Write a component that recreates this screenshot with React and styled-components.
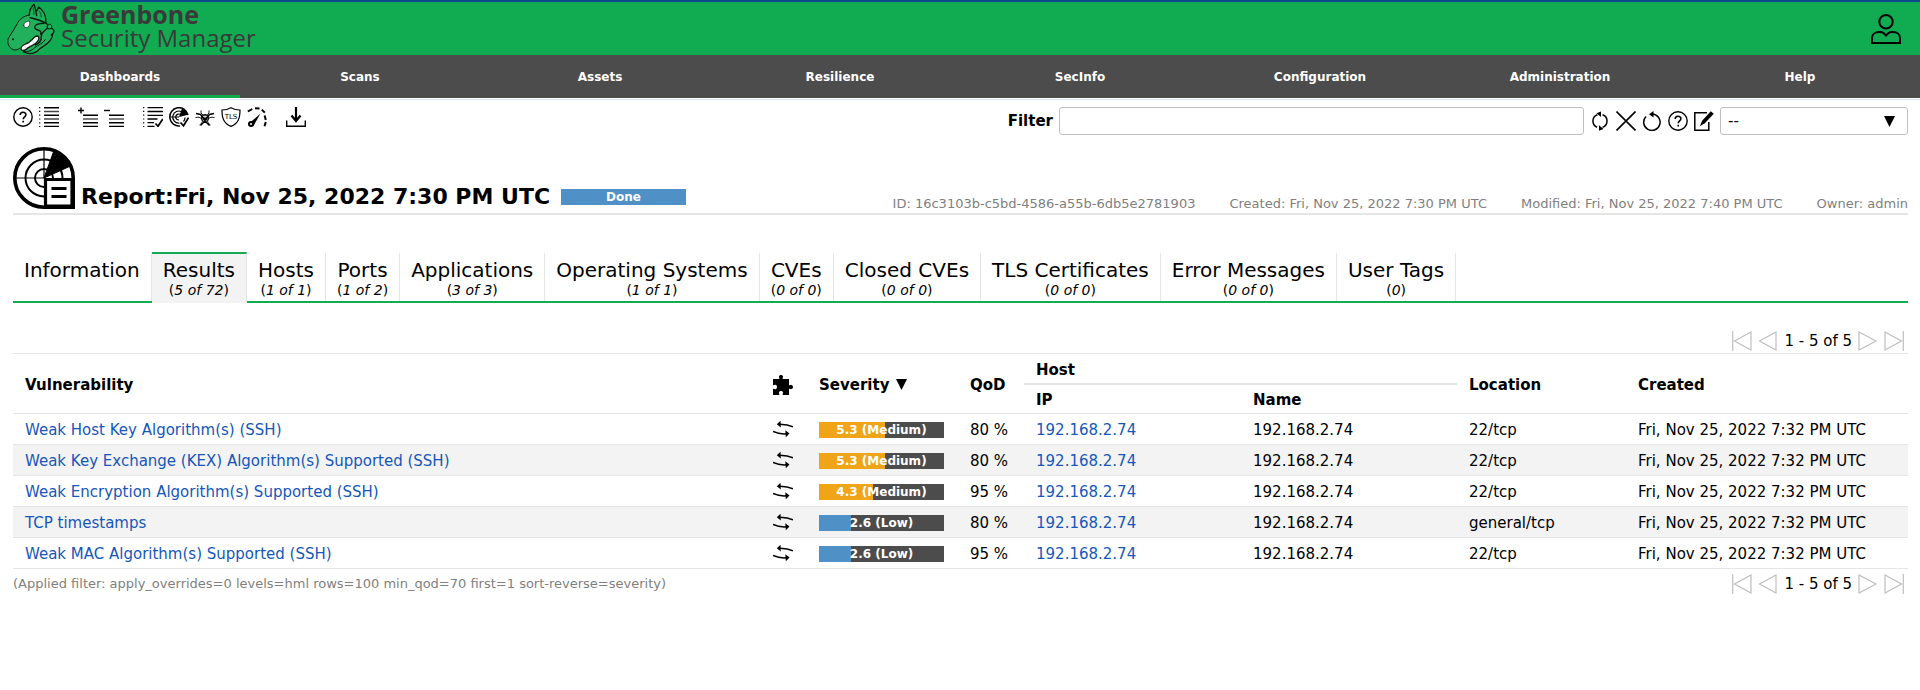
import React from 'react';
import styled, { createGlobalStyle, css } from 'styled-components';

const GREEN = '#11ab51';
const DARK = '#4c4c4c';
const LINE = '#e5e5e5';
const LINK = '#1557ba';
const MUTED = '#7f7f7f';

const GlobalStyle = createGlobalStyle`
  *, *::before, *::after { box-sizing: border-box; }
  body {
    margin: 0;
    background: #fff;
    color: #000;
    font-family: Verdana, "DejaVu Sans", sans-serif;
    font-size: 15px;
    line-height: 20px;
  }
  a { color: inherit; text-decoration: none; }
  button { font: inherit; color: inherit; background: none; border: 0; padding: 0; cursor: pointer; }
  svg { display: block; }
`;

const TopBar = styled.header`
  display: flex;
  align-items: center;
  justify-content: space-between;
  height: 55px;
  padding: 0 19px 0 7px;
  border-top: 2px solid #0b4a8c;
  background: ${GREEN};
`;

const Brand = styled.a`
  display: flex;
  align-items: center;
  gap: 5px;
  color: #3a3a3a;
`;

const BrandText = styled.span`
  display: flex;
  flex-direction: column;
  font-family: "Open Sans", "Noto Sans", sans-serif;
  font-size: 24px;
  line-height: 24px;
  padding-bottom: 6px;
`;

const BrandName = styled.strong`
  font-size: 25px;
  font-weight: 700;
`;

const IconButton = styled.button`
  flex: none;
  display: block;
`;

const Menu = styled.nav`
  display: flex;
  height: 43px;
  background: ${DARK};
`;

const MenuItem = styled.a`
  flex: 1;
  display: flex;
  align-items: center;
  justify-content: center;
  padding-top: 3px;
  border-bottom: 3px solid ${(p) => (p.$active ? GREEN : 'transparent')};
  color: #fff;
  font-size: 12px;
  font-weight: bold;
`;

const Main = styled.main`
  margin-top: 1px;
  padding: 7px 12px 0 13px;
  border-top: 1px solid #d8e6fa;
`;

const Toolbar = styled.div`
  display: flex;
  justify-content: space-between;
  align-items: flex-start;
`;

const IconGroups = styled.div`
  display: flex;
  gap: 19px;
`;

const IconGroup = styled.div`
  display: flex;
  gap: 6px;
`;

const FilterForm = styled.form`
  display: flex;
  align-items: center;
  gap: 6px;
`;

const FilterField = styled.div`
  display: flex;
  align-items: center;
  gap: 6px;
`;

const FilterLabel = styled.label`
  font-weight: bold;
`;

const field = css`
  height: 28px;
  border: 1px solid #bfbfbf;
  border-radius: 3px;
  background: #fff;
  color: #000;
  font: inherit;
`;

const FilterInput = styled.input`
  ${field}
  width: 525px;
  padding: 0 8px;
`;

const SelectBox = styled.div`
  display: grid;
  align-items: center;
  width: 188px;

  > * { grid-area: 1 / 1; }
  svg { justify-self: end; margin-right: 13px; pointer-events: none; }
`;

const FilterSelect = styled.select`
  ${field}
  width: 100%;
  padding: 0 7px;
  appearance: none;
`;

const EntityHeader = styled.section`
  display: flex;
  align-items: flex-end;
  justify-content: space-between;
  margin-top: 12px;
  border-bottom: 2px solid ${LINE};
`;

const EntityTitle = styled.div`
  display: flex;
  align-items: flex-end;
  gap: 6px;
  padding-bottom: 4px;
`;

const Heading = styled.h1`
  margin: 0;
  font-size: 22px;
  line-height: 24px;
`;

const Bar = styled.div`
  display: flex;
  align-items: center;
  justify-content: center;
  width: 125px;
  height: 16px;
  background: linear-gradient(90deg, ${(p) => p.$color} ${(p) => p.$fill}%, ${DARK} ${(p) => p.$fill}%);
  color: #fff;
  font-size: 12px;
  line-height: 16px;
  font-weight: bold;
`;

const StatusBar = styled(Bar)`
  margin: 0 0 4px 5px;
`;

const EntityInfo = styled.ul`
  display: flex;
  gap: 34px;
  margin: 0;
  padding: 0;
  list-style: none;
  color: ${MUTED};
  font-size: 13px;
  line-height: 18px;
  white-space: nowrap;
`;

const Tabs = styled.div`
  display: flex;
  margin-top: 37px;
  border-bottom: 2px solid ${GREEN};
`;

const Tab = styled.button`
  display: flex;
  flex-direction: column;
  align-items: center;
  height: 49px;
  padding: 6px 11px 0;
  border-top: 2px solid transparent;
  border-right: 1px solid ${LINE};
  white-space: nowrap;

  ${(p) => p.$active && css`
    height: 51px;
    margin-bottom: -2px;
    border-top-color: ${GREEN};
    background: #f3f3f3;
  `}
`;

const TabTitle = styled.span`
  font-size: 20px;
  line-height: 20px;
`;

const TabCount = styled.span`
  font-size: 14px;
  line-height: 20px;
`;

const Results = styled.section`
  margin-top: 28px;
`;

const PageRow = styled.div`
  display: flex;
  justify-content: space-between;
  align-items: center;
  padding: ${(p) => (p.$below ? '5px 4px 0 0' : '0 4px 2px 0')};
`;

const AppliedFilter = styled.span`
  color: ${MUTED};
  font-size: 13px;
`;

const Pager = styled.div`
  display: flex;
  align-items: center;
  gap: 6px;
  margin-left: auto;
`;

const Table = styled.table`
  width: 100%;
  table-layout: fixed;
  border-collapse: separate;
  border-spacing: 0;
  border-top: 1px solid ${LINE};
`;

const Col = styled.col`
  width: ${(p) => p.$width};
`;

const HeadCell = styled.th`
  height: ${(p) => (p.$group ? '31px' : '29px')};
  padding: 2px 0 0 12px;
  border-bottom: ${(p) => (p.$group ? 2 : 1)}px solid ${LINE};
  text-align: left;
  vertical-align: middle;
`;

const SortLink = styled.a`
  display: inline-flex;
  align-items: center;
  gap: 7px;
`;

const Row = styled.tr`
  background: ${(p) => (p.$even ? '#f3f3f3' : '#fff')};
`;

const Cell = styled.td`
  height: 31px;
  padding: 2px 0 0 12px;
  border-bottom: 1px solid ${LINE};
  white-space: nowrap;
`;

const TextLink = styled.a`
  color: ${LINK};
`;

const Icon = ({ children, size = 20, ...rest }) => (
  <svg width={size} height={size} viewBox="0 0 20 20" fill="none" stroke="#000" strokeWidth="1.4" aria-hidden="true" {...rest}>
    {children}
  </svg>
);

const HelpIcon = () => (
  <Icon>
    <circle cx="10" cy="10" r="9.2" />
    <path d="M7.2 8c0-3.6 5.700-3.600 5.700-.300 0 2-2.700 2.200-2.700 4.500M10.200 13.700v1.800" strokeWidth="1.600" />
  </Icon>
);

const ListIcon = () => (
  <Icon>
    <path d="M.7 0v20" strokeDasharray="1.200 2.600" strokeWidth="1.200" />
    <path d="M5 .7h15M5 8.300h15M5 15.700h15M5 19.400h15" />
    <path d="M5 4.500h15M5 12h15" stroke="#444" />
  </Icon>
);

const lowerLines = 'M5 8.300h15M5 15.700h15M5 19.400h15';

const SelectAllIcon = () => (
  <Icon>
    <path d="M0 3.500h6M3 .500v6" />
    <path d={lowerLines} />
    <path d="M5 12h15" stroke="#444" />
  </Icon>
);

const SelectNoneIcon = () => (
  <Icon>
    <path d="M0 3.500h6" />
    <path d={lowerLines} />
    <path d="M5 12h15" stroke="#444" />
  </Icon>
);

const ResultIcon = () => (
  <Icon>
    <path d="M.7 0v20" strokeDasharray="1.200 2.600" strokeWidth="1.200" />
    <path d="M4.500.7H20M4.500 4.500H20M4.500 8.300H20M4.500 12h10M4.500 15.700h6.500M4.500 19.400h7" strokeWidth="1.300" />
    <path d="M12.500 16.500l2.500 2.800 4.800-7.300" strokeWidth="1.700" />
  </Icon>
);

const VulnerabilityIcon = () => (
  <Icon>
    <path d="M11 19A9.200 9.200 0 1 1 19 8" strokeWidth="1.500" />
    <path d="M10.500 16A6 6 0 1 1 13 5M10 13a3 3 0 1 1 1-5.700M1 10h9M16 10.500a6 6 0 0 1-1.500 4" strokeWidth="1.200" />
    <path d="M10 10L13 1.200l4 2.600 2.200 4z" fill="#000" stroke="none" />
    <path d="M11.500 15.500l3 3.300 5-8" strokeWidth="1.700" />
  </Icon>
);

const BiohazardIcon = () => (
  <Icon strokeWidth=".9">
    <path d="M1 6.500l4.500 1 2.500 3M19 6.500l-4.500 1-2.500 3M10 12v2l-4.500 4.500M10 14l4.500 4.500" strokeWidth="1.500" />
    <path d="M6 3.500C5.500 6.500 7.500 8.800 10 8.800s4.500-2.300 4-5.300M.5 10.500c3.500-.8 6 .2 6.800 2.500.4 2-.8 4-2.800 5M19.500 10.500c-3.500-.8-6 .2-6.800 2.500-.4 2 .8 4 2.800 5" />
    <circle cx="10" cy="11" r="3.700" />
    <path d="M7 9.500l3 1.700 3-1.700-1.500 3.500h-3z" fill="#000" />
  </Icon>
);

const TlsIcon = () => (
  <Icon strokeWidth="1.200">
    <path d="M10 .700C7.200 2.300 4 3 1 3c0 8 1.500 13.500 9 16.400C17.500 16.500 19 11 19 3c-3 0-6.200-.700-9-2.300z" />
    <text x="10" y="12" textAnchor="middle" fontSize="7" fill="#000" stroke="none" fontFamily="DejaVu Sans, sans-serif">TLS</text>
  </Icon>
);

const GaugeIcon = () => (
  <Icon strokeWidth="2">
    <path d="M.8 4.500l4.500-2.500M8 1.200l4.500.3M14.800 2.600l3 3M17.600 8.500l1.200 4.500M18.800 15l-1.300 4.200" />
    <path d="M2 16.500L13.500 6.500L6.500 19z" fill="#000" stroke="none" />
    <circle cx="4" cy="17" r="3" fill="#000" stroke="none" />
    <circle cx="4" cy="17" r="1" fill="#fff" stroke="none" />
  </Icon>
);

const DownloadIcon = () => (
  <Icon>
    <path d="M.700 13.500v5.700h18.600v-5.700" />
    <path d="M10 0v12M5.500 8.500L10 14l4.500-5.500" strokeWidth="2.200" />
  </Icon>
);

const RefreshIcon = () => (
  <Icon strokeWidth="1.500">
    <path d="M7 16.200C1.500 14 1.500 5.500 7.500 3.700M12.500 3.700c6 2 6 10.500 0 12.700" />
    <path d="M6.500 2.200l4.500-1.700v5.500zM8.500 14l-1 .2 1 .3zM13.500 18l-4.500 1.700v-5.500z" fill="#000" stroke="none" />
  </Icon>
);

const ClearIcon = () => (
  <Icon strokeWidth="1.600">
    <path d="M.500.500l19 19M19.500.500L.500 19.500" />
  </Icon>
);

const ResetIcon = () => (
  <Icon strokeWidth="1.500">
    <path d="M4 5.500a8.200 8.200 0 1 0 6-2.500" />
    <path d="M11.500 0L7 3.200l4.500 3.400z" fill="#000" stroke="none" />
  </Icon>
);

const EditIcon = () => (
  <Icon strokeWidth="1.500">
    <path d="M13 1.700H.800v17.500h14V11" />
    <path d="M16.800.300l3 2.500-9 9.500-5 3 2.300-5.500z" fill="#000" stroke="none" />
  </Icon>
);

const ReportIcon = () => (
  <svg width="62" height="62" viewBox="0 0 62 62" fill="none" stroke="#000" aria-hidden="true">
    <path d="M31 60.200A29.200 29.200 0 1 1 60.200 31v29.200z" strokeWidth="3.600" fill="#fff" />
    <path d="M31 49.500A18.500 18.500 0 1 1 49.500 31M31 40a9 9 0 1 1 9-9" strokeWidth="2" />
    <path d="M31 2v29H2" strokeWidth="1.200" />
    <path d="M31 31L41 3.500C49 7 54 12 57.500 19z" fill="#000" />
    <path d="M32.500 32.500h26.500v26.500h-26.500z" fill="#fff" strokeWidth="3.200" />
    <path d="M38.500 41.500h15M38.500 49.500h15" strokeWidth="3.200" />
  </svg>
);

const UserIcon = () => (
  <svg width="30" height="30" viewBox="0 0 30 30" fill="none" stroke="#000" strokeWidth="2" aria-hidden="true">
    <circle cx="15" cy="7.700" r="6.700" />
    <path d="M1 29v-5c0-3.500 3-6 7-6 2.500 0 3.800.200 4.500 1l2.500 2.500 2.500-2.500c.700-.800 2-1 4.500-1 4 0 7 2.500 7 6v5z" />
  </svg>
);

const LogoIcon = () => (
  <svg width="49" height="52" viewBox="9 6 147 156" fill="none" stroke="#0c1a10" strokeWidth="3" strokeLinejoin="round" strokeLinecap="round" aria-hidden="true">
    <path d="M76 42C58 45 45 56 40 68L27 90 13 112c-4 12 0 28 15 34 10 3 17-1 22-6l8 16c20 6 45 2 62-12 16-12 28-28 28-44l-2-18-20-18c0-14-4-26-10-34L104 18l-6 10-8-18-11 12z" fill="#22b05c" stroke="none" />
    <path d="M76 42C58 45 45 56 40 68L27 90 13 112c-4 12 0 28 15 34 8 2 14 0 19-4" />
    <path d="M76 42c0-12 3-22 14-32 4 10 6 20 8 34M98 30l6-12c12 8 22 22 22 46" strokeWidth="4" />
    <path d="M88 20l2 20M106 30c4 6 6 10 6 18" stroke="#0b6b35" strokeWidth="4" />
    <path d="M78 50c16 4 34 8 46 16M124 64c-10 6-20 2-28 8-8 6-2 14 6 15 8 2 10 6 8 13M124 66c8 2 8 10 6 16l-12 10c-4 4-6 8-6 14" strokeWidth="4" />
    <path d="M130 76c2-8 10-8 13-2 2 6-2 10-8 10-4-1-6-4-5-8z" fill="#22b05c" />
    <path d="M142 82c8 2 9 8 6 14l-6 6M146 98c0 16-12 28-28 38-8 4-14 10-20 16-14 8-30 6-40 0M112 106c0 14-6 22-18 26" strokeWidth="4" />
    <path d="M58 152c16 2 26-4 34-12 10-8 24-12 32-24" strokeWidth="3" />
    <path d="M59 73c1-8 7-12 17-13 3 7 1 14-5 19-6 2-11 0-12-6z" fill="#fff" strokeWidth="2" />
    <path d="M51 144c-1-7 5-11 14-15 12-4 18-12 26-20 5-4 10-5 13-2 2 6-1 13-9 20-10 8-20 10-30 19-6 4-13 3-14-2z" fill="#fff" strokeWidth="4" />
    <path d="M62 134l4 8M74 128l4 8M85 119l4 8M95 110l4 7" stroke="#8a8a8a" strokeWidth="1" />
    <circle cx="27" cy="115" r="3" fill="#0c1a10" stroke="none" />
  </svg>
);

const PuzzleIcon = () => (
  <Icon stroke="none" fill="#000">
    <path d="M0 4h6.300c.500-.800-.600-1.300-.300-2.500C6.300.500 7 0 8 0s1.800.500 2 1.500c.300 1.200-.800 1.700-.300 2.500H16v6.200c.800.500 1.200-.500 2.300-.300 1.100.200 1.700 1 1.700 2.100s-.600 1.900-1.700 2.100c-1.100.200-1.500-.800-2.300-.300V20H9.800c-.500-.900.500-1.300.300-2.400-.200-.900-1-1.600-2.100-1.600s-1.900.700-2.100 1.600c-.200 1.100.8 1.500.3 2.400H0v-6c.800-.500 1.300.5 2.400.3C3.400 14.100 4 13.200 4 12s-.600-2.100-1.600-2.300C1.300 9.500.8 10.500 0 10z" />
  </Icon>
);

const SolutionIcon = () => (
  <Icon strokeWidth="1.500">
    <path d="M20 6.800C16 5.200 12 4.600 7 4.300M0 11.500c4.500 2 9 2.700 13.500 2.300" />
    <path d="M7.500.8L3.800 4.200l4 3.200zM12.300 10.200l4.200 3.400-3.700 3.600z" fill="#000" stroke="none" />
  </Icon>
);

const Triangle = () => (
  <svg width="11" height="11" viewBox="0 0 11 11" aria-hidden="true">
    <path d="M0 0h11L5.500 11z" />
  </svg>
);

const pagerShapes = {
  First: 'M.700 0v20M19 1v18L2.500 10z',
  Previous: 'M18 1v18L1.500 10z',
  Next: 'M1 1v18L18 10z',
  Last: 'M19.300 0v20M1 1v18L17.500 10z',
};

const PagerButton = ({ name }) => (
  <IconButton type="button" aria-label={name}>
    <Icon stroke="#bfbfbf" strokeWidth="1.200"><path d={pagerShapes[name]} /></Icon>
  </IconButton>
);

const Pagination = () => (
  <Pager>
    <PagerButton name="First" />
    <PagerButton name="Previous" />
    <span>1 - 5 of 5</span>
    <PagerButton name="Next" />
    <PagerButton name="Last" />
  </Pager>
);

const menuItems = ['Dashboards', 'Scans', 'Assets', 'Resilience', 'SecInfo', 'Configuration', 'Administration', 'Help'];

const toolGroups = [
  [['Help', HelpIcon], ['Reports list', ListIcon]],
  [['Add to assets', SelectAllIcon], ['Remove from assets', SelectNoneIcon]],
  [['Results', ResultIcon], ['Vulnerabilities', VulnerabilityIcon], ['Threats', BiohazardIcon], ['TLS certificates', TlsIcon], ['Performance', GaugeIcon]],
  [['Download', DownloadIcon]],
];

const filterTools = [
  ['Update filter', RefreshIcon],
  ['Remove filter', ClearIcon],
  ['Reset filter', ResetIcon],
  ['Filter help', HelpIcon],
  ['Edit filter', EditIcon],
];

const tabs = [
  ['Information'],
  ['Results', '5 of 72'],
  ['Hosts', '1 of 1'],
  ['Ports', '1 of 2'],
  ['Applications', '3 of 3'],
  ['Operating Systems', '1 of 1'],
  ['CVEs', '0 of 0'],
  ['Closed CVEs', '0 of 0'],
  ['TLS Certificates', '0 of 0'],
  ['Error Messages', '0 of 0'],
  ['User Tags', '0'],
];

const info = [
  'ID: 16c3103b-c5bd-4586-a55b-6db5e2781903',
  'Created: Fri, Nov 25, 2022 7:30 PM UTC',
  'Modified: Fri, Nov 25, 2022 7:40 PM UTC',
  'Owner: admin',
];

const columns = ['auto', '46px', '151px', '66px', '217px', '216px', '169px', '282px'];

const rows = [
  ['Weak Host Key Algorithm(s) (SSH)', 5.3, 'Medium', 80, '22/tcp'],
  ['Weak Key Exchange (KEX) Algorithm(s) Supported (SSH)', 5.3, 'Medium', 80, '22/tcp'],
  ['Weak Encryption Algorithm(s) Supported (SSH)', 4.3, 'Medium', 95, '22/tcp'],
  ['TCP timestamps', 2.6, 'Low', 80, 'general/tcp'],
  ['Weak MAC Algorithm(s) Supported (SSH)', 2.6, 'Low', 95, '22/tcp'],
];

const levelColors = { Medium: '#f0a519', Low: '#4f91c7' };

const Sort = ({ children }) => <SortLink href="#sort">{children}</SortLink>;

export default function App() {
  return (
    <>
      <GlobalStyle />
      <TopBar>
        <Brand href="#home">
          <LogoIcon />
          <BrandText>
            <BrandName>Greenbone</BrandName>
            <span>Security Manager</span>
          </BrandText>
        </Brand>
        <IconButton type="button" aria-label="User"><UserIcon /></IconButton>
      </TopBar>
      <Menu>
        {menuItems.map((item, i) => (
          <MenuItem key={item} href={`#${item}`} $active={i === 0}>{item}</MenuItem>
        ))}
      </Menu>
      <Main>
        <Toolbar>
          <IconGroups>
            {toolGroups.map((group, i) => (
              <IconGroup key={i}>
                {group.map(([name, Glyph]) => (
                  <IconButton key={name} type="button" aria-label={name}><Glyph /></IconButton>
                ))}
              </IconGroup>
            ))}
          </IconGroups>
          <FilterForm>
            <FilterField>
              <FilterLabel htmlFor="filter">Filter</FilterLabel>
              <FilterInput id="filter" type="text" />
            </FilterField>
            <IconGroup>
              {filterTools.map(([name, Glyph]) => (
                <IconButton key={name} type="button" aria-label={name}><Glyph /></IconButton>
              ))}
            </IconGroup>
            <SelectBox>
              <FilterSelect aria-label="Saved filter" defaultValue="--">
                <option>--</option>
              </FilterSelect>
              <Triangle />
            </SelectBox>
          </FilterForm>
        </Toolbar>

        <EntityHeader>
          <EntityTitle>
            <ReportIcon />
            <Heading>Report:Fri, Nov 25, 2022 7:30 PM UTC</Heading>
            <StatusBar $color="#4f91c7" $fill={100}>Done</StatusBar>
          </EntityTitle>
          <EntityInfo>
            {info.map((text) => <li key={text}>{text}</li>)}
          </EntityInfo>
        </EntityHeader>

        <Tabs role="tablist">
          {tabs.map(([title, count]) => (
            <Tab key={title} type="button" role="tab" aria-selected={title === 'Results'} $active={title === 'Results'}>
              <TabTitle>{title}</TabTitle>
              {count && <TabCount>(<i>{count}</i>)</TabCount>}
            </Tab>
          ))}
        </Tabs>

        <Results>
          <PageRow><Pagination /></PageRow>
          <Table>
            <colgroup>
              {columns.map((width, i) => <Col key={i} $width={width} />)}
            </colgroup>
            <thead>
              <tr>
                <HeadCell rowSpan={2}><Sort>Vulnerability</Sort></HeadCell>
                <HeadCell rowSpan={2} aria-label="Solution type"><PuzzleIcon /></HeadCell>
                <HeadCell rowSpan={2}><Sort>Severity <Triangle /></Sort></HeadCell>
                <HeadCell rowSpan={2}><Sort>QoD</Sort></HeadCell>
                <HeadCell colSpan={2} $group>Host</HeadCell>
                <HeadCell rowSpan={2}><Sort>Location</Sort></HeadCell>
                <HeadCell rowSpan={2}><Sort>Created</Sort></HeadCell>
              </tr>
              <tr>
                <HeadCell><Sort>IP</Sort></HeadCell>
                <HeadCell><Sort>Name</Sort></HeadCell>
              </tr>
            </thead>
            <tbody>
              {rows.map(([name, score, level, qod, location], i) => (
                <Row key={name} $even={i % 2 === 1}>
                  <Cell><TextLink href="#result">{name}</TextLink></Cell>
                  <Cell><SolutionIcon /></Cell>
                  <Cell><Bar $color={levelColors[level]} $fill={score * 10}>{score} ({level})</Bar></Cell>
                  <Cell>{qod} %</Cell>
                  <Cell><TextLink href="#host">192.168.2.74</TextLink></Cell>
                  <Cell>192.168.2.74</Cell>
                  <Cell>{location}</Cell>
                  <Cell>Fri, Nov 25, 2022 7:32 PM UTC</Cell>
                </Row>
              ))}
            </tbody>
          </Table>
          <PageRow $below>
            <AppliedFilter>
              (Applied filter: apply_overrides=0 levels=hml rows=100 min_qod=70 first=1 sort-reverse=severity)
            </AppliedFilter>
            <Pagination />
          </PageRow>
        </Results>
      </Main>
    </>
  );
}
